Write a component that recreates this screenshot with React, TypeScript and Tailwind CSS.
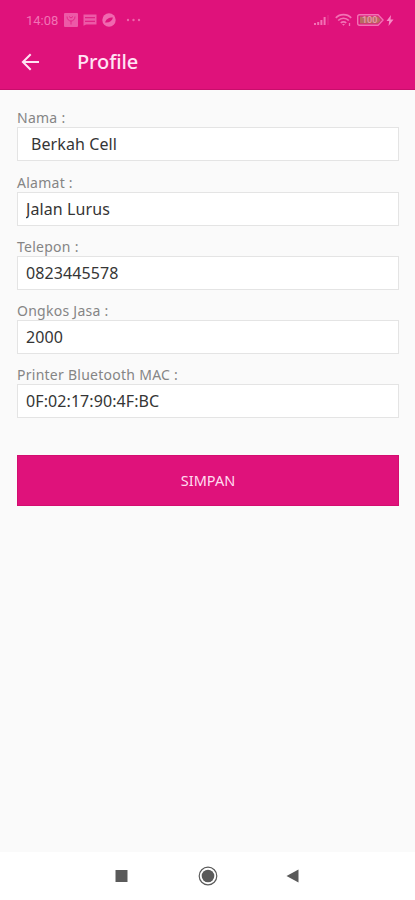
import React, { useState } from "react";

interface FieldProps {
  label: string;
  value: string;
  inputClass?: string;
  onChange: (value: string) => void;
}

const Field: React.FC<FieldProps> = ({ label, value, inputClass = "", onChange }) => {
  return (
    <label className="flex h-[64.2px] flex-col">
      <span className="h-[18px] whitespace-nowrap text-[14px] leading-[17px] tracking-[0.26px] text-[#858585]">
        {label}
      </span>
      <input
        type="text"
        value={value}
        onChange={(e) => onChange(e.target.value)}
        className={"h-[34px] w-full border border-[#e4e4e4] bg-white text-[16px] tracking-[0.09px] text-[#353535] outline-none " + (inputClass || "pl-2")}
      />
    </label>
  );
};

const StatusBar = () => {
  return (
    <div className="flex h-10 items-center justify-between pr-[21px] pl-[26px] text-[#f272b5]">
      <div className="flex items-center">
        <span className="w-[38px] font-[Roboto] text-[13px] leading-none">14:08</span>
        <svg width="14" height="14" viewBox="0 0 14 14">
          <rect width="14" height="14" rx="1" fill="currentColor" opacity="0.75" />
          <path d="M3 3.500c0 3 2 4.500 4 4.500s4-1.500 4-4.500M5 3.500l2 1.500 2-1.500M7 8v3.500" fill="none" stroke="#df127b" strokeWidth="1" opacity="0.7" />
        </svg>
        <svg width="14" height="14" viewBox="0 0 14 14" className="ml-[5px]">
          <path d="M.5 1.500h13v10H3L.5 12.800z" fill="currentColor" opacity="0.75" />
          <path d="M2 4.700h10M2 8.300h10" stroke="#df127b" strokeWidth="1.300" opacity="0.8" />
        </svg>
        <svg width="14" height="14" viewBox="0 0 14 14" className="ml-[5px]">
          <circle cx="7" cy="7" r="6.700" fill="currentColor" opacity="0.9" />
          <path d="M3 9.500c1-3 3-5 8-5-1 4-4 5.500-8 5z" fill="#df127b" />
        </svg>
        <svg width="16" height="4" viewBox="0 0 16 4" className="ml-[10px]" fill="currentColor" opacity="0.85">
          <circle cx="2" cy="2" r="1.200" />
          <circle cx="7.500" cy="2" r="1.200" />
          <circle cx="13" cy="2" r="1.200" />
        </svg>
      </div>
      <div className="flex items-center">
        <svg width="16" height="12" viewBox="0 0 16 12" fill="currentColor">
          <path d="M0 9h2v2H0zM3.200 8h2v3h-2zM6.400 6h2v5h-2zM9.600 3h2v8h-2z" />
          <path d="M13.500 1h1v10h-1z" opacity="0.35" />
        </svg>
        <svg width="17" height="14" viewBox="0 0 17 14" className="ml-[5px]" fill="none" stroke="currentColor" strokeWidth="1.700">
          <path d="M.8 4.800c4-4.300 11.400-4.300 15.400 0M3.200 7.500c2.800-3 7.800-3 10.600 0M5.800 10c1.500-1.600 3.900-1.600 5.400 0" />
          <path d="M7 11l1.500 1.800L10 11z" fill="currentColor" stroke="none" />
          <path d="M14.500 10v3" strokeWidth="1.300" />
        </svg>
        <div className="ml-[5px] flex items-center">
          <div className="relative h-3 w-[27px]">
            <svg width="27" height="12" viewBox="0 0 27 12">
              <path d="M2.500.7h18.500l2 2 3 3.300-3 3.300-2 2H2.500Q.7 11.300.7 9.500v-7Q.7.700 2.500.700z" fill="none" stroke="currentColor" strokeWidth="1.400" />
              <path d="M3 2.500h18l3 3.500-3 3.500H3z" fill="#b76b62" />
            </svg>
            <span className="absolute top-[2px] left-[5px] font-[Roboto] text-[9px] leading-[8px] font-medium text-[#ee95b0]">100</span>
          </div>
          <svg width="8" height="11" viewBox="0 0 8 11" className="ml-[2px]">
            <path d="M5 0L.5 6h2.700L2.500 11 7.500 4.500H4.500z" fill="#f58cc6" />
          </svg>
        </div>
      </div>
    </div>
  );
};

const App: React.FC = () => {
  const [nama, setNama] = useState<string>("Berkah Cell");
  const [alamat, setAlamat] = useState<string>("Jalan Lurus");
  const [telepon, setTelepon] = useState<string>("0823445578");
  const [ongkos, setOngkos] = useState<string>("2000");
  const [printer, setPrinter] = useState<string>("0F:02:17:90:4F:BC");

  return (
    <div className="flex h-[900px] w-full flex-col bg-[#fafafa] font-['Noto_Sans',sans-serif]">
      <header className="h-[90px] border-b border-[#c80d6b] bg-[#df127b]">
        <StatusBar />
        <div className="flex h-[43px] items-center pl-[21px] text-[#ffe3f3]">
          <svg width="19" height="18" viewBox="0 0 19 18" fill="none" stroke="currentColor" strokeWidth="2">
            <path d="M18 9H2M9.700 1.200L1.900 9l7.800 7.800" />
          </svg>
          <h1 className="ml-[37px] text-[20px] font-medium tracking-[-0.1px]">Profile</h1>
        </div>
      </header>

      <main className="flex flex-1 flex-col pt-[19.4px] pr-4 pl-[17px]">
        <Field label="Nama :" value={nama} onChange={setNama} inputClass="pl-[13px]" />
        <Field label="Alamat :" value={alamat} onChange={setAlamat} />
        <Field label="Telepon :" value={telepon} onChange={setTelepon} />
        <Field label="Ongkos Jasa :" value={ongkos} onChange={setOngkos} />
        <Field label="Printer Bluetooth MAC :" value={printer} onChange={setPrinter} />
        <button className="mt-[24.6px] h-[51px] w-full border border-[#d30d70] bg-[#df127b] text-[14.5px] text-[#ffdcef]">
          SIMPAN
        </button>
      </main>

      <nav className="flex h-12 items-center bg-white pl-[115px] text-[#5a5a5a]">
        <svg width="13" height="13" viewBox="0 0 13 13">
          <path d="M.5 0h12v12H.5z" fill="currentColor" />
        </svg>
        <svg width="20" height="20" viewBox="0 0 20 20" className="ml-[70px]">
          <circle cx="10" cy="10" r="8.800" fill="none" stroke="currentColor" strokeWidth="1.200" />
          <circle cx="10" cy="10" r="6.300" fill="currentColor" />
        </svg>
        <svg width="13" height="14" viewBox="0 0 13 14" className="ml-[68px]">
          <path d="M12.500.5v13L.5 7z" fill="currentColor" />
        </svg>
      </nav>
    </div>
  );
};

export default App;
